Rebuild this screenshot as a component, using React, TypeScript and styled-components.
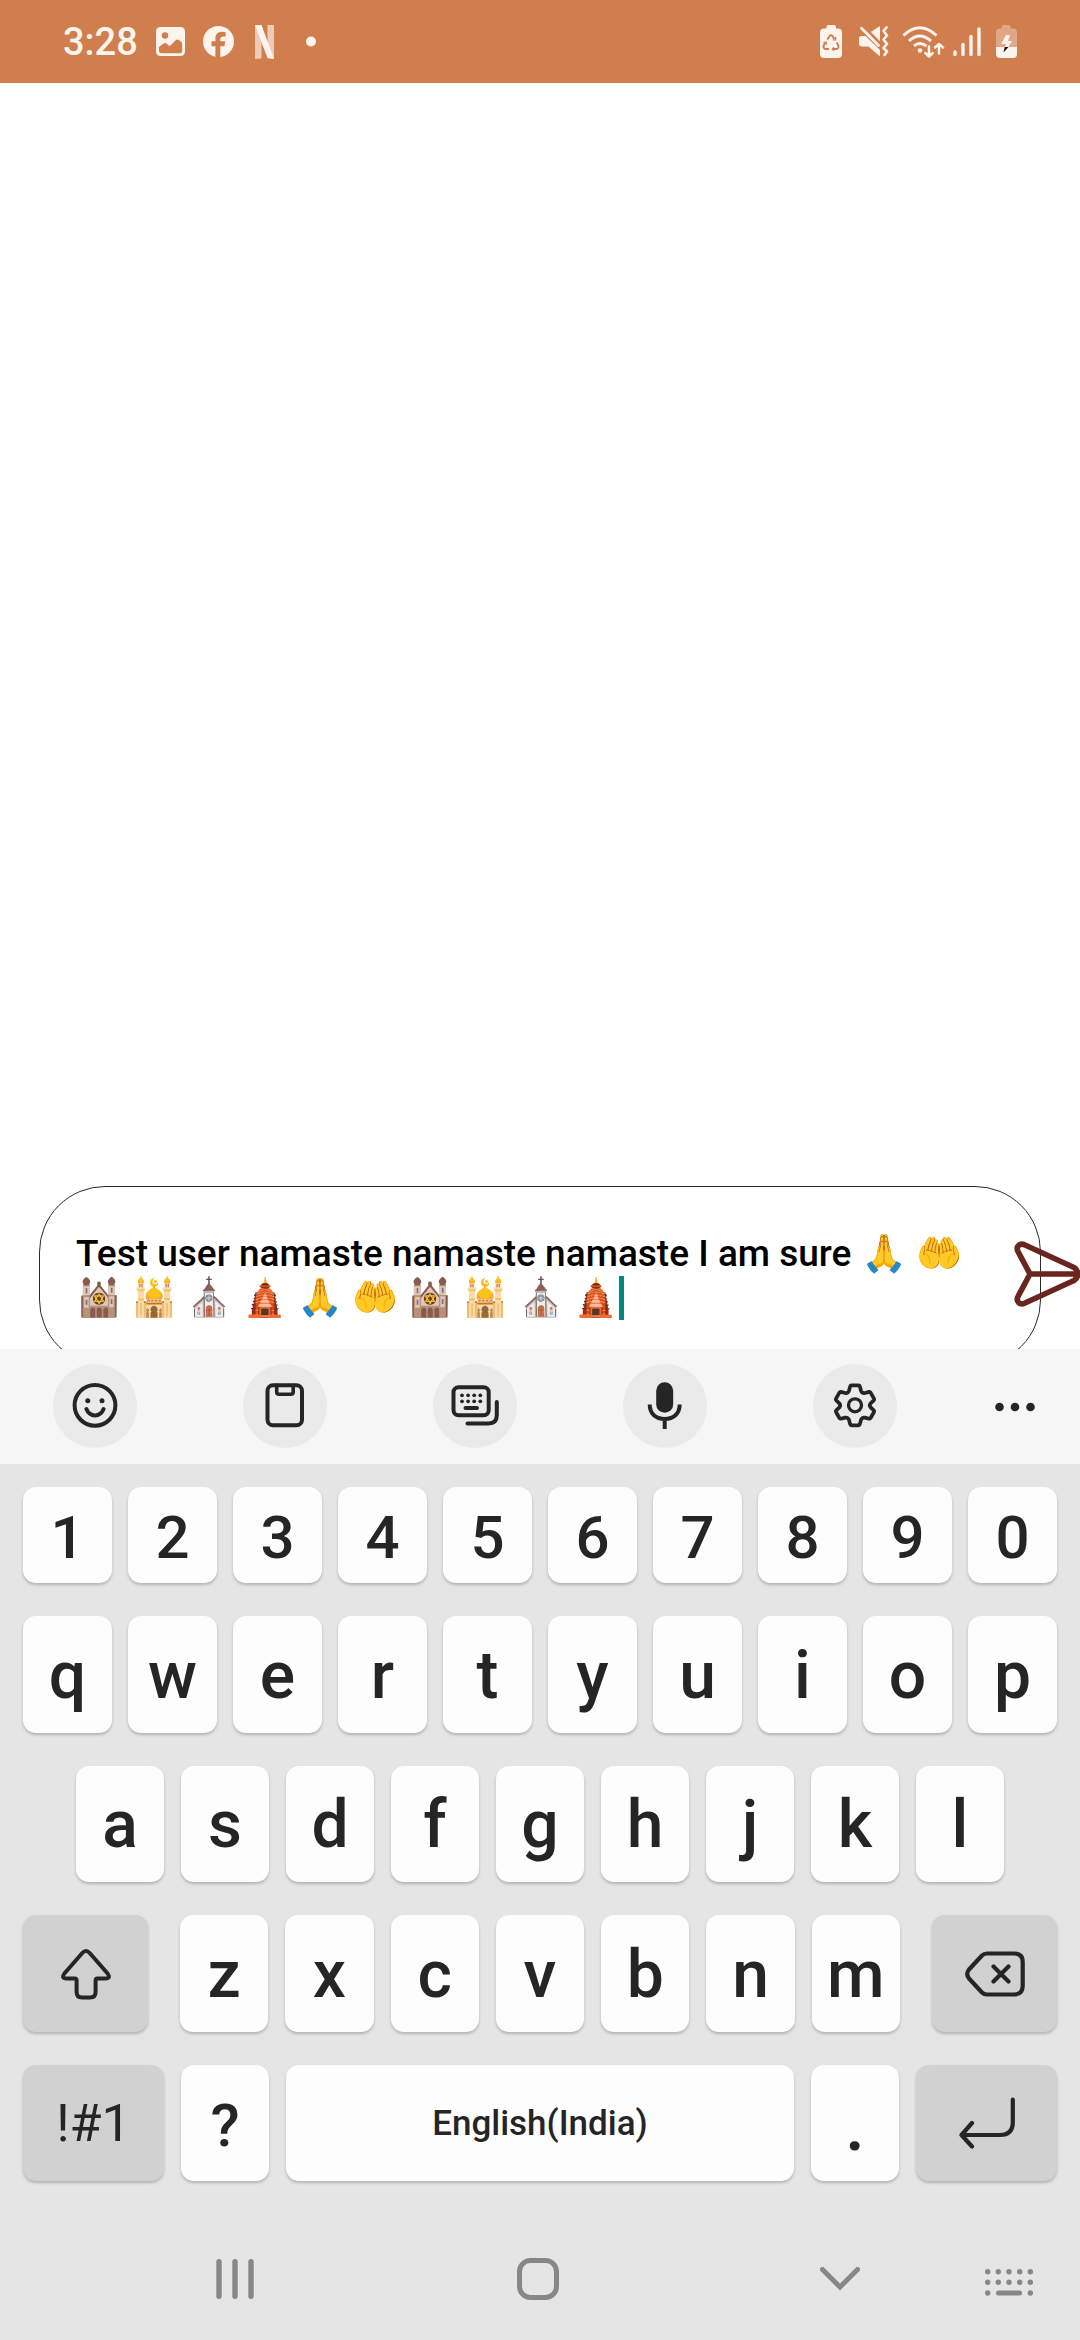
import React, { useState } from "react";
import styled, { createGlobalStyle } from "styled-components";

const color = {
  status: "#d17e4f",
  statusInk: "#fdf4ee",
  page: "#ffffff",
  toolbar: "#f6f6f6",
  toolCircle: "#eaeaea",
  board: "#e5e5e5",
  key: "#fdfdfd",
  keyDark: "#d1d1d1",
  ink: "#252525",
  nav: "#878787",
  send: "#68261f",
  caret: "#00897b",
};

const GlobalStyle = createGlobalStyle`
  * { box-sizing: border-box; }
  html, body { margin: 0; padding: 0; background: ${color.page}; }
  body, button, textarea { font-family: Roboto, "Noto Sans", sans-serif; }
  button { border: 0; padding: 0; margin: 0; cursor: pointer; }
  svg { display: block; flex: none; }
`;

const Screen = styled.div`
  display: flex;
  flex-direction: column;
  min-height: 100vh;
  background: ${color.page};
`;

const StatusBar = styled.header`
  display: flex;
  align-items: center;
  justify-content: space-between;
  height: 83px;
  padding: 0 63px;
  background: ${color.status};
  color: ${color.statusInk};
`;

const StatusGroup = styled.div<{ $gap: number }>`
  display: flex;
  align-items: center;
  gap: ${(p) => p.$gap}px;
`;

const Clock = styled.time`
  font-size: 38px;
  line-height: 48px;
  font-weight: 500;
`;

const Chat = styled.main`
  flex: 1;
  display: flex;
  flex-direction: column;
  justify-content: flex-end;
  overflow: hidden;
`;

const Composer = styled.form`
  position: relative;
  margin: 0 39px -17px;
`;

const Field = styled.div`
  display: grid;
  border: 1px solid #2a2a2a;
  border-radius: 66px;
  padding: 45px 60px 45px 36px;
  background: ${color.page};
  font-size: 37px;
  line-height: 44px;
  font-weight: 500;
`;

const Message = styled.textarea`
  grid-area: 1 / 1;
  height: 88px;
  border: 0;
  padding: 0;
  outline: 0;
  resize: none;
  overflow: hidden;
  background: transparent;
  color: #000;
  font-size: inherit;
  line-height: inherit;
  font-weight: inherit;
  caret-color: transparent;
`;

/* Hidden copy of the message that carries the thick caret to the end of the text. */
const CaretTrack = styled.div`
  grid-area: 1 / 1;
  height: 88px;
  visibility: hidden;
  white-space: pre-wrap;
  overflow-wrap: break-word;
  pointer-events: none;
`;

const Caret = styled.span`
  display: inline-block;
  visibility: visible;
  width: 5px;
  height: 44px;
  vertical-align: bottom;
  background: ${color.caret};
`;

const SendButton = styled.button`
  position: absolute;
  top: 55px;
  right: -39px;
  background: none;
`;

const Keyboard = styled.section`
  background: ${color.board};
`;

const Toolbar = styled.div`
  display: grid;
  grid-template-columns: repeat(5, 19fr) 13fr;
  justify-items: center;
  padding: 15px 0 16px;
  background: ${color.toolbar};
`;

const ToolButton = styled.button<{ $plain?: boolean }>`
  display: grid;
  place-items: center;
  width: 84px;
  height: 84px;
  border-radius: 50%;
  background: ${(p) => (p.$plain ? "none" : color.toolCircle)};
  color: ${color.ink};
`;

const Rows = styled.div`
  display: grid;
  gap: 33px;
  padding: 23px 23px 0;
`;

const Row = styled.div<{ $columns: string; $gap: number; $height: number; $inset?: number }>`
  display: grid;
  grid-template-columns: ${(p) => p.$columns};
  gap: ${(p) => p.$gap}px;
  height: ${(p) => p.$height}px;
  padding: 0 ${(p) => p.$inset ?? 0}px;
`;

const Key = styled.button<{ $size?: number; $weight?: number; $dark?: boolean; $drop?: number }>`
  display: flex;
  align-items: center;
  justify-content: center;
  min-width: 0;
  padding-top: ${(p) => p.$drop ?? 0}px;
  border-radius: 13px;
  background: ${(p) => (p.$dark ? color.keyDark : color.key)};
  box-shadow: 0 2px 3px rgba(0, 0, 0, 0.22);
  color: ${color.ink};
  font-size: ${(p) => p.$size ?? 66}px;
  line-height: 76px;
  font-weight: ${(p) => p.$weight ?? 500};
`;

const NavBar = styled.nav`
  display: flex;
  align-items: center;
  gap: 109px;
  height: 122px;
  margin-top: 37px;
  padding: 0 41px 0 205px;
  color: ${color.nav};
`;

const NavGroup = styled.div`
  flex: 1;
  display: flex;
  justify-content: space-between;
`;

const NavButton = styled.button`
  display: grid;
  place-items: center;
  width: 60px;
  height: 60px;
  background: none;
  color: inherit;
`;

const line = {
  fill: "none",
  stroke: "currentColor",
  strokeWidth: 4,
  strokeLinecap: "round" as const,
  strokeLinejoin: "round" as const,
};

const PictureIcon = () => (
  <svg width="29" height="30" viewBox="0 0 29 30">
    <rect width="29" height="29" rx="4.5" fill="currentColor" />
    <circle cx="9" cy="8.5" r="3.2" fill={color.status} />
    <path d="M3 20 L7.5 16.5 Q9 15.500 10.500 16.500 L13.500 19.300 L20 13 Q21.500 11.800 23 13 L26.200 16 V23.500 Q26.200 26.200 23.500 26.200 H5.700 Q3 26.200 3 23.500 Z" fill={color.status} />
  </svg>
);

const FacebookIcon = () => (
  <svg width="31" height="31" viewBox="0 0 31 31">
    <circle cx="15.500" cy="15.500" r="15.500" fill="currentColor" />
    <path d="M12.400 31 V20.300 H8.500 V15.300 H12.400 V12.500 Q12.400 5.800 19 5.800 Q21.300 5.800 22.700 6.200 V10.500 H20.300 Q17.300 10.500 17.300 13 V15.300 H22.200 L21.400 20.300 H17.300 V31 Z" fill={color.status} />
  </svg>
);

const NetflixIcon = () => (
  <svg width="26" height="34" viewBox="0 0 26 34">
    <path d="M3 0 H9.500 V33.500 L3 34 Z M15.500 0 H22 V34 L15.500 33 Z" fill="currentColor" opacity="0.65" />
    <path d="M3 0 H9.500 L22 34 L15.500 33 Z" fill="currentColor" />
  </svg>
);

const MoreDot = () => (
  <svg width="30" height="30" viewBox="0 0 30 30">
    <circle cx="15" cy="14.500" r="5" fill="currentColor" />
  </svg>
);

const RecycleBatteryIcon = () => (
  <svg width="28" height="33" viewBox="0 0 28 33">
    <path d="M6.500 3.500 V2 Q6.500 0 8.500 0 H14 Q16 0 16 2 V3.500 H18 Q22 3.500 22 7.500 V29 Q22 33 18 33 H4 Q0 33 0 29 V7.500 Q0 3.500 4 3.500 Z" fill="currentColor" />
    <path d="M7.300 14.500 L9.800 10.800 Q11 9.500 12.200 10.800 L14.500 14.300 M16.800 17.500 L18.300 20.500 Q19 23.500 16.500 24 H13 M9 24 H5.500 Q3 23.500 3.700 20.500 L5.300 17.500" fill="none" stroke={color.status} strokeWidth="2" />
    <path d="M15.600 12 V15 H12.500 M14 22.200 L12.300 24 L14 25.800 M3.500 17.800 L6 17 L6.800 19.500" fill="none" stroke={color.status} strokeWidth="1.200" />
  </svg>
);

const MutedVibrateIcon = () => (
  <svg width="38" height="31" viewBox="0 0 38 31">
    <path d="M12.500 7.500 L24 0 V18 Z" fill="currentColor" />
    <path d="M3.500 10 H9.500 L24 24 V30.500 L12.500 20.500 H6 Q3 20.500 3 17.500 V12.500 Q3 10 5.500 10 Z" fill="currentColor" />
    <path d="M7.500 0.500 L26 19.500" fill="none" stroke={color.status} strokeWidth="3" />
    <path d="M5.500 2.300 L22.500 19.500" {...line} strokeWidth="2.800" />
    <path d="M30.500 1.500 L27.500 5 L31 9.500 L27.500 13.500 L31 18 L27.500 22 L31 25.500 L28.500 29" {...line} strokeWidth="2.600" />
  </svg>
);

const WifiIcon = () => (
  <svg width="43" height="32" viewBox="0 0 43 32">
    <g {...line} strokeWidth="3" strokeLinecap="butt">
      <path d="M1.500 9.500 Q17.500 -6 34.500 9.500" />
      <path d="M7 15 Q17.500 5 29 15" />
      <path d="M12 20 Q17.500 15 24.500 20" />
    </g>
    <circle cx="18" cy="24.500" r="2.300" fill="currentColor" />
    <path d="M27 20.500 V30 M23.300 27 L27 30.500 L30.700 27 M37 27.500 V19 M33 21.500 L37 18 L41 21.500" {...line} strokeWidth="2.500" />
  </svg>
);

const SignalIcon = () => (
  <svg width="34" height="30" viewBox="0 0 34 30">
    <path d="M2 25 V27.500 M10 17.500 V27.500 M18 9.500 V27.500 M26 2 V27.500" {...line} strokeWidth="3.400" />
  </svg>
);

const ChargingIcon = () => (
  <svg width="22" height="33" viewBox="0 0 22 33">
    <path d="M6.500 3.500 V2 Q6.500 0 8.500 0 H13.500 Q15.500 0 15.500 2 V3.500 H18 Q22 3.500 22 7.500 V22 H1 V7.500 Q1 3.500 5 3.500 Z" fill="currentColor" opacity="0.35" />
    <path d="M1 22 H22 V29 Q22 33 18 33 H5 Q1 33 1 29 Z" fill="currentColor" />
    <path d="M11 10 H15 L13 16 H17 L13.500 22 H10 L11 19 H6 Z" fill="currentColor" />
    <path d="M9.700 22 H13.500 L8.500 27.500 Z" fill="#111" />
  </svg>
);

const SendIcon = () => (
  <svg width="66" height="66" viewBox="0 0 66 66">
    <path d="M16 33 L4 10.500 C1.500 5.500 6 1.500 11 4 L60 26.500 C65 29.500 65 36.500 60 39.500 L11 62 C6 64.500 1.500 60.500 4 55.500 Z M16 33 H63" {...line} stroke={color.send} strokeWidth="5.600" />
  </svg>
);

const SmileIcon = () => (
  <svg width="48" height="48" viewBox="0 0 48 48">
    <circle cx="24" cy="23.300" r="20.400" {...line} />
    <circle cx="16.800" cy="18.700" r="2.500" fill="currentColor" />
    <circle cx="31" cy="18.700" r="2.500" fill="currentColor" />
    <path d="M15.400 27 Q18 33.400 24 33.400 Q30 33.400 32.600 27" {...line} />
  </svg>
);

const ClipboardIcon = () => (
  <svg width="48" height="48" viewBox="0 0 48 48">
    <rect x="6.500" y="3.300" width="34.500" height="40" rx="5.500" {...line} />
    <path d="M15.700 3.300 V10 Q15.700 12.200 18 12.200 H30 Q32.200 12.200 32.200 10 V3.300" {...line} strokeWidth="3.600" />
  </svg>
);

const KeyboardsIcon = () => (
  <svg width="48" height="48" viewBox="0 0 48 48">
    <rect x="2.500" y="5.300" width="35.200" height="28" rx="5" {...line} />
    <path d="M45.800 20 V33 Q45.800 41.500 37.500 41.500 H16.500 M14.500 26 H26" {...line} />
    {[11, 17.100, 23.200, 29.300].map((x) => (
      <g key={x} fill="currentColor">
        <circle cx={x} cy="13.300" r="1.900" />
        <circle cx={x} cy="19.300" r="1.900" />
      </g>
    ))}
  </svg>
);

const MicIcon = () => (
  <svg width="48" height="48" viewBox="0 0 48 48">
    <rect x="15.200" y="0.300" width="17" height="30.500" rx="8.500" fill="currentColor" />
    <path d="M8.700 22.500 C8.700 32 15 37 23.700 37 S38.700 32 38.700 22.500 M23.700 37 V47" {...line} strokeLinecap="butt" />
  </svg>
);

const GearIcon = () => (
  <svg width="48" height="48" viewBox="0 0 48 48">
    <path
      d="M20.500 3.300 H27.500 Q28.500 3.300 28.900 4.500 L30 8.800 Q31 11.500 34 11 L38 9.900 Q39 9.700 39.600 10.600 L43 16.600 Q43.500 17.600 42.800 18.300 L39.600 21.300 Q38 23.300 39.600 25.300 L42.800 28.300 Q43.500 29 43 30 L39.600 36 Q39 36.900 38 36.700 L34 35.600 Q31 35.100 30 37.800 L28.900 42.100 Q28.500 43.300 27.500 43.300 H20.500 Q19.500 43.300 19.100 42.100 L18 37.800 Q17 35.100 14 35.600 L10 36.700 Q9 36.900 8.400 36 L5 30 Q4.500 29 5.200 28.300 L8.400 25.300 Q10 23.300 8.400 21.300 L5.200 18.300 Q4.500 17.600 5 16.600 L8.400 10.600 Q9 9.700 10 9.900 L14 11 Q17 11.500 18 8.800 L19.100 4.500 Q19.500 3.300 20.500 3.300 Z"
      {...line}
      strokeWidth="3.700"
    />
    <circle cx="24" cy="23.300" r="6.500" {...line} strokeWidth="3.300" />
  </svg>
);

const DotsIcon = () => (
  <svg width="48" height="48" viewBox="0 0 48 48" fill="currentColor">
    <circle cx="8.500" cy="25" r="4.300" />
    <circle cx="24" cy="25" r="4.300" />
    <circle cx="39.500" cy="25" r="4.300" />
  </svg>
);

const ShiftIcon = () => (
  <svg width="52" height="52" viewBox="0 0 52 52">
    <path d="M22.300 5 Q26 0.800 29.700 5 L47.600 25.500 Q51 30.500 45.500 30.500 H37.500 Q35.600 30.500 35.600 32.400 V44 Q35.600 49.500 30 49.500 H22 Q16.600 49.500 16.600 44 V32.400 Q16.600 30.500 14.700 30.500 H6.500 Q1 30.500 4.400 25.500 Z" {...line} />
  </svg>
);

const BackspaceIcon = () => (
  <svg width="60" height="46" viewBox="0 0 60 46">
    <path d="M22 2.500 H49 Q57.700 2.500 57.700 11 V35 Q57.700 43.500 49 43.500 H22 Q19 43.500 17 41.500 L4 27.500 Q0.500 23 4 18.500 L17 4.500 Q19 2.500 22 2.500 Z M28.500 15.500 L43.500 30.500 M43.500 15.500 L28.500 30.500" {...line} strokeWidth="4.200" />
  </svg>
);

const EnterIcon = () => (
  <svg width="56" height="52" viewBox="0 0 56 52">
    <path d="M53.800 2.500 V25 Q53.800 38 41 38 H3 M13 26 L2.500 38 L13 49.500" {...line} strokeWidth="4.200" />
  </svg>
);

const RecentsIcon = () => (
  <svg width="38" height="40" viewBox="0 0 38 40">
    <path d="M3 2.700 V37.300 M19 2.700 V37.300 M35 2.700 V37.300" {...line} strokeWidth="5.400" />
  </svg>
);

const HomeIcon = () => (
  <svg width="42" height="42" viewBox="0 0 42 42">
    <rect x="2.500" y="2.500" width="37" height="37" rx="11" {...line} strokeWidth="5" />
  </svg>
);

const ChevronIcon = () => (
  <svg width="40" height="24" viewBox="0 0 40 24">
    <path d="M2.500 2.500 L20 20 L37.500 2.500" {...line} strokeWidth="5" strokeLinejoin="miter" />
  </svg>
);

const SwitchKeyboardIcon = () => (
  <svg width="48" height="33" viewBox="0 -6 48 33">
    {[2.700, 13.300, 24, 34.700, 45.300].map((x, i) => (
      <g key={x} fill="currentColor">
        <circle cx={x} cy="2.700" r="2.700" />
        <circle cx={x} cy="13.300" r="2.700" />
        {(i === 0 || i === 4) && <circle cx={x} cy="24" r="2.700" />}
      </g>
    ))}
    <path d="M13.500 24 H34.500" {...line} strokeWidth="5" />
  </svg>
);

const tools = [
  { label: "Emoji", icon: <SmileIcon /> },
  { label: "Clipboard", icon: <ClipboardIcon /> },
  { label: "Keyboard modes", icon: <KeyboardsIcon /> },
  { label: "Voice input", icon: <MicIcon /> },
  { label: "Settings", icon: <GearIcon /> },
];

export default function App() {
  const [text, setText] = useState(
    "Test user namaste namaste namaste I am sure 🙏 🤲 🕍 🕌 ⛪ 🛕 🙏 🤲 🕍 🕌 ⛪ 🛕"
  );
  const type = (s: string) => () => setText((t) => t + s);
  const letters = (s: string) =>
    [...s].map((c) => (
      <Key key={c} type="button" $drop={2} onClick={type(c)}>
        {c}
      </Key>
    ));

  return (
    <Screen>
      <GlobalStyle />
      <StatusBar>
        <StatusGroup $gap={18}>
          <Clock>3:28</Clock>
          <PictureIcon />
          <FacebookIcon />
          <NetflixIcon />
          <MoreDot />
        </StatusGroup>
        <StatusGroup $gap={8}>
          <RecycleBatteryIcon />
          <MutedVibrateIcon />
          <WifiIcon />
          <SignalIcon />
          <ChargingIcon />
        </StatusGroup>
      </StatusBar>

      <Chat>
        <Composer onSubmit={(e) => e.preventDefault()}>
          <Field>
            <Message aria-label="Message" value={text} onChange={(e) => setText(e.target.value)} />
            <CaretTrack aria-hidden="true">
              {text}
              <Caret />
            </CaretTrack>
          </Field>
          <SendButton type="submit" aria-label="Send">
            <SendIcon />
          </SendButton>
        </Composer>
      </Chat>

      <Keyboard aria-label="Keyboard">
        <Toolbar>
          {tools.map((t) => (
            <ToolButton key={t.label} type="button" aria-label={t.label}>
              {t.icon}
            </ToolButton>
          ))}
          <ToolButton type="button" aria-label="More" $plain>
            <DotsIcon />
          </ToolButton>
        </Toolbar>
        <Rows>
          <Row $columns="repeat(10, 1fr)" $gap={16} $height={96}>
            {[..."1234567890"].map((c) => (
              <Key key={c} type="button" $size={60} $drop={6} onClick={type(c)}>
                {c}
              </Key>
            ))}
          </Row>
          <Row $columns="repeat(10, 1fr)" $gap={16} $height={117}>
            {letters("qwertyuiop")}
          </Row>
          <Row $columns="repeat(9, 1fr)" $gap={17} $height={116} $inset={53}>
            {letters("asdfghjkl")}
          </Row>
          <Row $columns="125fr 720fr 125fr" $gap={32} $height={117}>
            <Key type="button" $dark aria-label="Shift">
              <ShiftIcon />
            </Key>
            <Row $columns="repeat(7, 1fr)" $gap={17} $height={117}>
              {letters("zxcvbnm")}
            </Row>
            <Key type="button" $dark aria-label="Backspace" onClick={() => setText((t) => [...t].slice(0, -1).join(""))}>
              <BackspaceIcon />
            </Key>
          </Row>
          <Row $columns="141fr 88fr 508fr 88fr 141fr" $gap={17} $height={116}>
            <Key type="button" $dark $size={52} $weight={400} $drop={2}>
              !#1
            </Key>
            <Key type="button" $size={60} $drop={6} onClick={type("?")}>
              ?
            </Key>
            <Key type="button" $size={35} $drop={2} onClick={type(" ")}>
              English(India)
            </Key>
            <Key type="button" $size={72} $drop={6} onClick={type(".")}>
              .
            </Key>
            <Key type="button" $dark aria-label="Enter" onClick={type("\n")}>
              <EnterIcon />
            </Key>
          </Row>
        </Rows>
        <NavBar>
          <NavGroup>
            <NavButton type="button" aria-label="Recent apps">
              <RecentsIcon />
            </NavButton>
            <NavButton type="button" aria-label="Home">
              <HomeIcon />
            </NavButton>
            <NavButton type="button" aria-label="Hide keyboard">
              <ChevronIcon />
            </NavButton>
          </NavGroup>
          <NavButton type="button" aria-label="Switch keyboard">
            <SwitchKeyboardIcon />
          </NavButton>
        </NavBar>
      </Keyboard>
    </Screen>
  );
}
